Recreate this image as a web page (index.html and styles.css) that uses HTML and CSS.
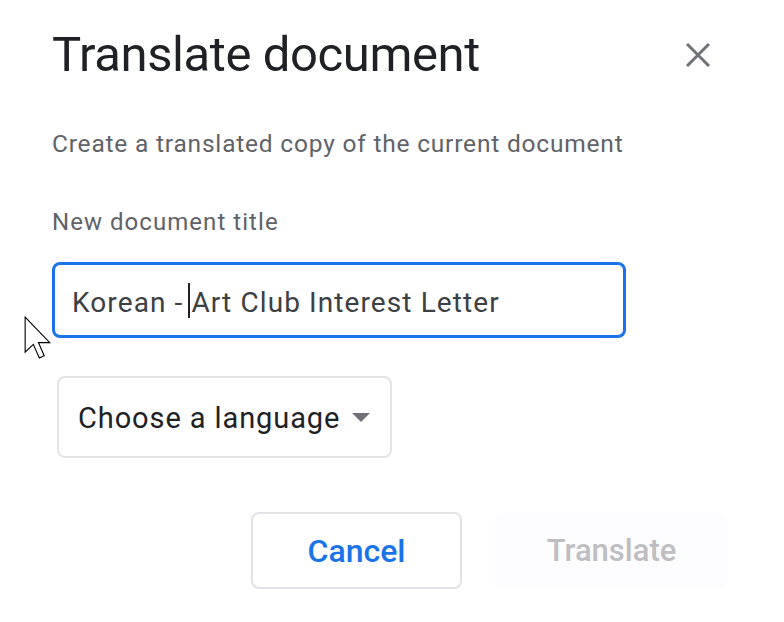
FILE: index.html
```html
<!DOCTYPE html>
<html>
<head>
<meta charset="utf-8">
<link rel="stylesheet" href="styles.css">
</head>
<body>
<div class="dialog">
  <div class="header">
    <h1 class="title">Translate document</h1>
    <button class="close" aria-label="Close">
      <svg width="24" height="24" viewBox="0 0 24 24"><path d="M1 1L23 23M23 1L1 23" stroke="#6f7276" stroke-width="3" fill="none"/></svg>
    </button>
  </div>
  <p class="subtitle">Create a translated copy of the current document</p>
  <label class="label">New document title</label>
  <div class="input">Korean -&nbsp;<span class="caret"></span>Art Club Interest Letter</div>
  <div class="select">
    <span class="select-text">Choose a language</span>
    <svg class="arrow" width="18" height="9" viewBox="0 0 18 9"><path d="M0 0L9 9L18 0Z" fill="#6f7276"/></svg>
  </div>
  <div class="actions">
    <button class="btn btn-cancel">Cancel</button>
    <button class="btn btn-translate">Translate</button>
  </div>
</div>
<svg class="pointer" width="28" height="43" viewBox="0 0 12.6 19.4"><path d="M0.5 0.5L0.5 16.3L4.2 12.8L6.9 18.9L9.1 17.9L6.5 12H11.6Z" fill="#fff" stroke="#000" stroke-width="0.5" stroke-linejoin="miter"/></svg>
</body>
</html>
```
FILE: styles.css
```css
html, body {
  margin: 0;
  padding: 0;
  background: #ffffff;
}
body {
  font-family: Roboto, "Liberation Sans", sans-serif;
  position: relative;
  width: 784px;
  height: 622px;
  overflow: hidden;
}
.dialog {
  padding: 27px 0 0 52px;
  width: 676px;
}
.header {
  display: flex;
  align-items: center;
  justify-content: space-between;
}
.title {
  margin: 0;
  font-size: 49px;
  line-height: 56px;
  font-weight: 400;
  color: #202124;
  letter-spacing: -0.4px;
}
.close {
  border: 0;
  background: none;
  padding: 0;
  margin: 0 18px 0 0;
  width: 24px;
  height: 24px;
  display: flex;
}
.subtitle {
  margin: 46px 0 0 0;
  font-size: 24.5px;
  line-height: 30px;
  color: #5f6368;
  letter-spacing: 0.8px;
}
.label {
  display: block;
  margin-top: 48px;
  font-size: 24px;
  line-height: 30px;
  color: #5f6368;
  letter-spacing: 1.05px;
}
.input {
  box-sizing: border-box;
  margin-top: 25px;
  width: 574px;
  height: 76px;
  border: 3px solid #1a73e8;
  border-radius: 8px;
  padding: 5px 17px 0 17px;
  font-size: 28px;
  line-height: 65px;
  color: #3c4043;
  white-space: nowrap;
  letter-spacing: 1.1px;
}
.caret {
  display: inline-block;
  width: 2px;
  height: 35px;
  background: #202124;
  vertical-align: -6px;
  margin-left: -3px;
  margin-right: 1px;
}
.select {
  box-sizing: border-box;
  margin: 38px 0 0 5px;
  width: 335px;
  height: 82px;
  border: 2px solid #e2e3e6;
  border-radius: 8px;
  padding: 0 20px 0 19px;
  display: flex;
  align-items: center;
  justify-content: space-between;
}
.select-text {
  font-size: 29px;
  line-height: 36px;
  color: #202124;
  position: relative;
  top: 1px;
  letter-spacing: 0.9px;
}
.arrow {
  display: block;
}
.actions {
  margin-top: 54px;
  display: flex;
  justify-content: flex-end;
  gap: 33px;
}
.btn {
  box-sizing: border-box;
  height: 77px;
  font-family: Roboto, "Liberation Sans", sans-serif;
  font-size: 32px;
  font-weight: 500;
  border-radius: 8px;
  padding: 0;
  margin: 0;
}
.btn-cancel {
  width: 211px;
  border: 2px solid #e2e3e6;
  background: #ffffff;
  color: #1a73e8;
}
.btn-translate {
  width: 233px;
  height: 76px;
  border: 0;
  background: #fdfcfe;
  color: #bfbfc3;
  font-size: 31px;
}
.pointer {
  position: absolute;
  left: 24px;
  top: 316px;
}
```
